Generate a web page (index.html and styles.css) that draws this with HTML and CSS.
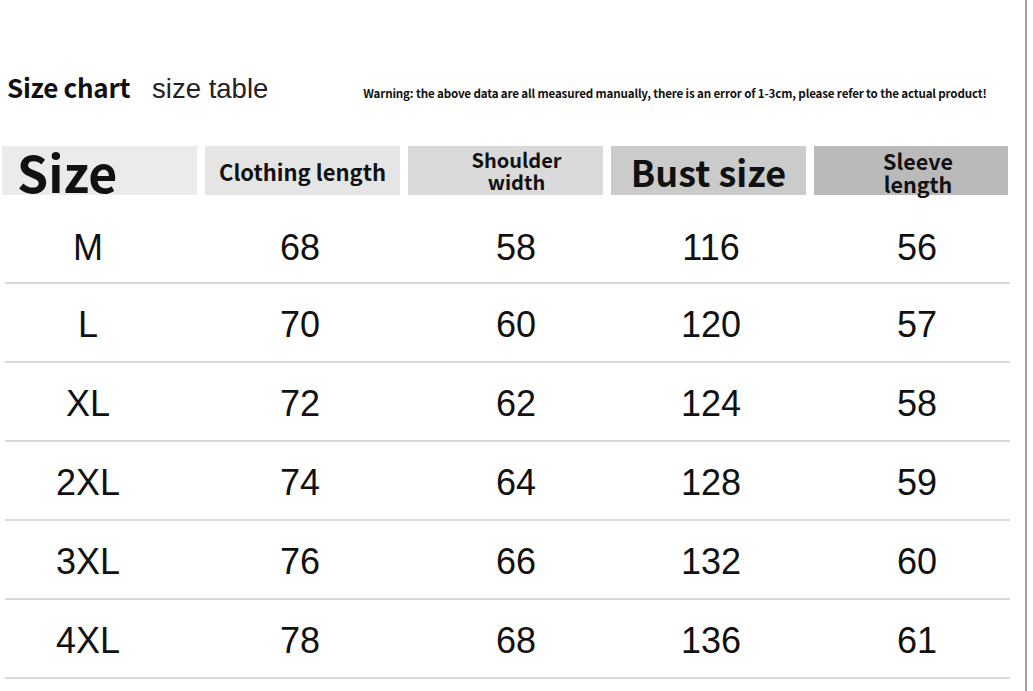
FILE: index.html
```html
<!DOCTYPE html>
<html>
<head>
<meta charset="utf-8">
<link rel="stylesheet" href="styles.css">
</head>
<body>
<div class="page">
  <div class="title-row">
    <span class="title">Size chart</span>
    <span class="subtitle">size table</span>
    <span class="warning">Warning: the above data are all measured manually, there is an error of 1-3cm, please refer to the actual product!</span>
  </div>
  <div class="head">
    <div class="hcell c1 size-h">Size</div>
    <div class="hcell c2 small">Clothing length</div>
    <div class="hcell c3 two">Shoulder<br>width</div>
    <div class="hcell c4 big">Bust size</div>
    <div class="hcell c5 two sleeve">Sleeve<br>length</div>
  </div>
  <div class="body">
    <div class="row"><div>M</div><div>68</div><div>58</div><div>116</div><div class="last">56</div></div>
    <div class="row"><div>L</div><div>70</div><div>60</div><div>120</div><div class="last">57</div></div>
    <div class="row"><div>XL</div><div>72</div><div>62</div><div>124</div><div class="last">58</div></div>
    <div class="row"><div>2XL</div><div>74</div><div>64</div><div>128</div><div class="last">59</div></div>
    <div class="row"><div>3XL</div><div>76</div><div>66</div><div>132</div><div class="last">60</div></div>
    <div class="row"><div>4XL</div><div>78</div><div>68</div><div>136</div><div class="last">61</div></div>
  </div>
</div>
</body>
</html>
```

FILE: styles.css
```css
html, body {
  margin: 0;
  padding: 0;
  background: #ffffff;
}
.page {
  width: 1025px;
  height: 691px;
  border-right: 2px solid #a3a3a3;
  box-sizing: content-box;
  overflow: hidden;
  font-family: "Noto Sans CJK SC", "Noto Sans", sans-serif;
  color: #111;
}
.title-row {
  display: flex;
  align-items: baseline;
  padding: 72px 0 0 7px;
  height: 30px;
  line-height: 30px;
  white-space: nowrap;
}
.title {
  font-weight: 700;
  font-size: 26px;
  letter-spacing: -0.3px;
}
.subtitle {
  font-family: "Liberation Sans", Arial, sans-serif;
  font-size: 27.5px;
  margin-left: 22px;
  color: #222;
}
.warning {
  font-weight: 700;
  font-size: 11.6px;
  margin-left: 95px;
  letter-spacing: -0.16px;
  color: #111;
}
.head {
  display: grid;
  grid-template-columns: 195px 195px 195px 195px 194px;
  column-gap: 8px;
  margin: 44px 0 0 2px;
  height: 48px;
}
.hcell {
  display: flex;
  align-items: center;
  justify-content: center;
  text-align: center;
  font-weight: 700;
  white-space: nowrap;
}
.c1 { background: #ebebeb; }
.c2 { background: #e5e5e5; }
.c3 { background: #dadada; }
.c4 { background: #cbcbcb; }
.c5 { background: #bababa; }
.size-h {
  justify-content: flex-start;
  padding-left: 15px;
  font-size: 50px;
  line-height: 48px;
}
.small {
  font-size: 22px;
}
.big {
  font-size: 36px;
  line-height: 44px;
}
.two {
  font-size: 20px;
  line-height: 22px;
  padding-left: 22px;
}
.sleeve {
  font-size: 21.5px;
  line-height: 23px;
  padding-top: 3px;
  padding-left: 14px;
}
.body {
  margin: 12px 0 0 5px;
  width: 1005px;
}
.row {
  display: grid;
  grid-template-columns: 166px 258px 174px 216px 191px;
  height: 79px;
  box-sizing: border-box;
  border-bottom: 2px solid #d9d9d9;
  align-items: center;
  font-family: "Liberation Sans", Arial, sans-serif;
  font-size: 36px;
  color: #111;
  padding-top: 4px;
}
.row:first-child {
  height: 78px;
  padding-top: 8px;
}
.row > div {
  text-align: center;
}
.row > .last {
  padding-left: 5px;
}
```
